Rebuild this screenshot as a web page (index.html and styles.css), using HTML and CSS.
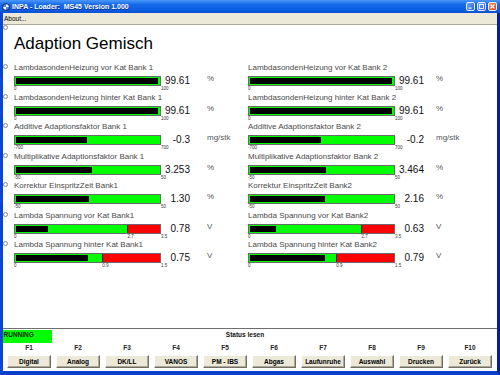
FILE: index.html
```html
<!DOCTYPE html>
<html lang="de">
<head>
	<meta charset="UTF-8">
	<title>INPA - Loader: MS45 Version 1.000</title>
	<link rel="stylesheet" href="styles.css">
</head>
<body>

	<div class="window">
		<div class="titlebar">
			<svg class="app-icon" viewBox="0 0 8 8">
				<circle cx="4" cy="4" r="3.8" fill="#1b2f6e"/>
				<path d="M4 4 L4 1.2 A2.8 2.8 0 0 1 6.8 4 Z" fill="#fff"/>
				<path d="M4 4 L4 6.8 A2.8 2.8 0 0 1 1.2 4 Z" fill="#fff"/>
				<path d="M4 4 L6.8 4 A2.8 2.8 0 0 1 4 6.8 Z" fill="#4c8ee8"/>
				<path d="M4 4 L1.2 4 A2.8 2.8 0 0 1 4 1.2 Z" fill="#4c8ee8"/>
			</svg>
			<span class="title">INPA - Loader:  MS45 Version 1.000</span>
			<div class="caption-buttons">
				<div class="caption-btn">
					<svg viewBox="0 0 7 7"><rect x="1.5" y="4.5" width="3" height="1.2" fill="#fff"/></svg>
				</div>
				<div class="caption-btn">
					<svg viewBox="0 0 7 7"><rect x="1.5" y="1.5" width="4" height="4" fill="none" stroke="#fff" stroke-width="0.9"/></svg>
				</div>
				<div class="caption-btn close">
					<svg viewBox="0 0 7 7"><path d="M1.6 1.6 L5.4 5.4 M5.4 1.6 L1.6 5.4" stroke="#fff" stroke-width="1.2"/></svg>
				</div>
			</div>
		</div>

		<div class="frame">
			<div class="menubar">About...</div>

			<div class="panel">
				<div class="panel-head">
					<span class="dot"></span>
					<h1>Adaption Gemisch</h1>
				</div>

				<div class="columns">
					<div class="col col-left">
						<div class="meter">
							<span class="dot"></span>
							<div class="meter-body">
								<div class="meter-label">LambdasondenHeizung vor Kat Bank 1</div>
								<div class="meter-line">
									<div class="gauge">
										<div class="bar"><div class="fill" style="width: 99.61%"></div></div>
										<div class="scale"><span>0</span><span style="left: 100%">100</span></div>
									</div>
									<div class="value">99.61</div>
									<div class="unit">%</div>
								</div>
							</div>
						</div>
						<div class="meter">
							<span class="dot"></span>
							<div class="meter-body">
								<div class="meter-label">LambdasondenHeizung hinter Kat Bank 1</div>
								<div class="meter-line">
									<div class="gauge">
										<div class="bar"><div class="fill" style="width: 99.61%"></div></div>
										<div class="scale"><span>0</span><span style="left: 100%">100</span></div>
									</div>
									<div class="value">99.61</div>
									<div class="unit">%</div>
								</div>
							</div>
						</div>
						<div class="meter">
							<span class="dot"></span>
							<div class="meter-body">
								<div class="meter-label">Additive Adaptionsfaktor Bank 1</div>
								<div class="meter-line">
									<div class="gauge">
										<div class="bar"><div class="fill" style="width: 49.98%"></div></div>
										<div class="scale"><span>-700</span><span style="left: 100%">700</span></div>
									</div>
									<div class="value">-0.3</div>
									<div class="unit">mg/stk</div>
								</div>
							</div>
						</div>
						<div class="meter">
							<span class="dot"></span>
							<div class="meter-body">
								<div class="meter-label">Multiplikative Adaptionsfaktor Bank 1</div>
								<div class="meter-line">
									<div class="gauge">
										<div class="bar"><div class="fill" style="width: 53.25%"></div></div>
										<div class="scale"><span>-50</span><span style="left: 100%">50</span></div>
									</div>
									<div class="value">3.253</div>
									<div class="unit">%</div>
								</div>
							</div>
						</div>
						<div class="meter">
							<span class="dot"></span>
							<div class="meter-body">
								<div class="meter-label">Korrektur EinspritzZeit Bank1</div>
								<div class="meter-line">
									<div class="gauge">
										<div class="bar"><div class="fill" style="width: 51.3%"></div></div>
										<div class="scale"><span>-50</span><span style="left: 100%">50</span></div>
									</div>
									<div class="value">1.30</div>
									<div class="unit">%</div>
								</div>
							</div>
						</div>
						<div class="meter">
							<span class="dot"></span>
							<div class="meter-body">
								<div class="meter-label">Lambda Spannung vor Kat Bank1</div>
								<div class="meter-line">
									<div class="gauge">
										<div class="bar zoned" style="--warn: 77.14%"><div class="fill" style="width: 22.29%"></div></div>
										<div class="scale"><span>0</span><span style="left: 77.14%">2.7</span><span style="left: 100%">3.5</span></div>
									</div>
									<div class="value">0.78</div>
									<div class="unit">V</div>
								</div>
							</div>
						</div>
						<div class="meter">
							<span class="dot"></span>
							<div class="meter-body">
								<div class="meter-label">Lambda Spannung hinter Kat Bank1</div>
								<div class="meter-line">
									<div class="gauge">
										<div class="bar zoned" style="--warn: 60%"><div class="fill" style="width: 50%"></div></div>
										<div class="scale"><span>0</span><span style="left: 60%">0.9</span><span style="left: 100%">1.5</span></div>
									</div>
									<div class="value">0.75</div>
									<div class="unit">V</div>
								</div>
							</div>
						</div>
					</div>

					<div class="col col-right">
						<div class="meter">
							<div class="meter-body">
								<div class="meter-label">LambdasondenHeizung vor Kat Bank 2</div>
								<div class="meter-line">
									<div class="gauge">
										<div class="bar"><div class="fill" style="width: 99.61%"></div></div>
										<div class="scale"><span>0</span><span style="left: 100%">100</span></div>
									</div>
									<div class="value">99.61</div>
									<div class="unit">%</div>
								</div>
							</div>
						</div>
						<div class="meter">
							<div class="meter-body">
								<div class="meter-label">LambdasondenHeizung hinter Kat Bank 2</div>
								<div class="meter-line">
									<div class="gauge">
										<div class="bar"><div class="fill" style="width: 99.61%"></div></div>
										<div class="scale"><span>0</span><span style="left: 100%">100</span></div>
									</div>
									<div class="value">99.61</div>
									<div class="unit">%</div>
								</div>
							</div>
						</div>
						<div class="meter">
							<div class="meter-body">
								<div class="meter-label">Additive Adaptionsfaktor Bank 2</div>
								<div class="meter-line">
									<div class="gauge">
										<div class="bar"><div class="fill" style="width: 49.99%"></div></div>
										<div class="scale"><span>-700</span><span style="left: 100%">700</span></div>
									</div>
									<div class="value">-0.2</div>
									<div class="unit">mg/stk</div>
								</div>
							</div>
						</div>
						<div class="meter">
							<div class="meter-body">
								<div class="meter-label">Multiplikative Adaptionsfaktor Bank 2</div>
								<div class="meter-line">
									<div class="gauge">
										<div class="bar"><div class="fill" style="width: 53.46%"></div></div>
										<div class="scale"><span>-50</span><span style="left: 100%">50</span></div>
									</div>
									<div class="value">3.464</div>
									<div class="unit">%</div>
								</div>
							</div>
						</div>
						<div class="meter">
							<div class="meter-body">
								<div class="meter-label">Korrektur EinspritzZeit Bank2</div>
								<div class="meter-line">
									<div class="gauge">
										<div class="bar"><div class="fill" style="width: 52.16%"></div></div>
										<div class="scale"><span>-50</span><span style="left: 100%">50</span></div>
									</div>
									<div class="value">2.16</div>
									<div class="unit">%</div>
								</div>
							</div>
						</div>
						<div class="meter">
							<div class="meter-body">
								<div class="meter-label">Lambda Spannung vor Kat Bank2</div>
								<div class="meter-line">
									<div class="gauge">
										<div class="bar zoned" style="--warn: 77.14%"><div class="fill" style="width: 18%"></div></div>
										<div class="scale"><span>0</span><span style="left: 77.14%">2.7</span><span style="left: 100%">3.5</span></div>
									</div>
									<div class="value">0.63</div>
									<div class="unit">V</div>
								</div>
							</div>
						</div>
						<div class="meter">
							<div class="meter-body">
								<div class="meter-label">Lambda Spannung hinter Kat Bank2</div>
								<div class="meter-line">
									<div class="gauge">
										<div class="bar zoned" style="--warn: 60%"><div class="fill" style="width: 52.67%"></div></div>
										<div class="scale"><span>0</span><span style="left: 60%">0.9</span><span style="left: 100%">1.5</span></div>
									</div>
									<div class="value">0.79</div>
									<div class="unit">V</div>
								</div>
							</div>
						</div>
					</div>
				</div>
			</div>

			<div class="statusbar">
				<div class="running">RUNNING</div>
				<div class="status-text">Status lesen</div>
			</div>

			<div class="fkeys">
				<div class="fkey"><span class="fkey-label">F1</span><button>Digital</button></div>
				<div class="fkey"><span class="fkey-label">F2</span><button>Analog</button></div>
				<div class="fkey"><span class="fkey-label">F3</span><button>DK/LL</button></div>
				<div class="fkey"><span class="fkey-label">F4</span><button>VANOS</button></div>
				<div class="fkey"><span class="fkey-label">F5</span><button>PM - IBS</button></div>
				<div class="fkey"><span class="fkey-label">F6</span><button>Abgas</button></div>
				<div class="fkey"><span class="fkey-label">F7</span><button>Laufunruhe</button></div>
				<div class="fkey"><span class="fkey-label">F8</span><button>Auswahl</button></div>
				<div class="fkey"><span class="fkey-label">F9</span><button>Drucken</button></div>
				<div class="fkey"><span class="fkey-label">F10</span><button>Zurück</button></div>
			</div>
		</div>
	</div>

</body>
</html>
```

FILE: styles.css
```css
* {
	box-sizing: border-box;
}

body {
	margin: 0;
	font-family: "Liberation Sans", Arial, sans-serif;
	background-color: #fff;
}

.window {
	width: 500px;
	height: 375px;
	display: flex;
	flex-direction: column;
}

/* Titelleiste */
.titlebar {
	height: 13px;
	display: flex;
	align-items: center;
	padding-left: 2px;
	background: linear-gradient(#4a97fa 0%, #166ae9 35%, #0a5de3 80%, #0a4fcc 100%);
	color: #fff;
}

.app-icon {
	width: 8px;
	height: 8px;
}

.title {
	margin-left: 2px;
	font-size: 7px;
	font-weight: bold;
	white-space: pre;
	text-shadow: 0.5px 0.5px 0 #0a2f8a;
}

.caption-buttons {
	margin-left: auto;
	margin-right: 3px;
	display: flex;
	gap: 2px;
}

.caption-btn {
	width: 9px;
	height: 9px;
	border: 1px solid #e8eefc;
	border-radius: 2px;
	background: linear-gradient(135deg, #6aa4fa, #2a62e6);
}

.caption-btn svg {
	display: block;
	width: 7px;
	height: 7px;
}

.caption-btn.close {
	background: linear-gradient(135deg, #f29a78, #d9421c);
}

/* Fensterrahmen */
.frame {
	flex: 1;
	display: flex;
	flex-direction: column;
	border-style: solid;
	border-width: 0 3px 4px 3px;
	border-color: #0a46d6 #00229e #0a3fcb #0a46d6;
}

.menubar {
	height: 12px;
	padding-left: 1px;
	background-color: #ece9d8;
	border-bottom: 1px solid #aca899;
	font-size: 6.5px;
	line-height: 11px;
}

/* Messwerte */
.panel {
	flex: 1;
	background-color: #fff;
}

.panel-head {
	display: flex;
	align-items: flex-start;
}

.panel-head h1 {
	margin: 9px 0 0;
	font-size: 17px;
	font-weight: normal;
	line-height: 20px;
	color: #000;
}

.dot {
	flex: none;
	width: 5px;
	height: 5px;
	margin-right: 6px;
	border: 1px solid #8a8a8a;
	border-radius: 50%;
	background-color: #fff;
}

.columns {
	display: flex;
	margin-top: 9px;
}

.col-left {
	width: 245px;
}

.meter {
	display: flex;
	align-items: flex-start;
	height: 29.5px;
}

.meter .dot {
	margin-top: 1px;
}

.meter-label {
	font-size: 8px;
	line-height: 10px;
	color: #4a4a4a;
	white-space: nowrap;
}

.meter-line {
	display: flex;
	align-items: flex-start;
	margin-top: 3px;
}

.gauge {
	width: 147px;
}

.bar {
	height: 10px;
	padding: 1px;
	border: 1px solid #6a6a6a;
	background-color: #00ff00;
}

.bar.zoned {
	background: linear-gradient(to right,
		#00ff00 var(--warn),
		#303030 var(--warn),
		#303030 calc(var(--warn) + 1px),
		#ff0000 calc(var(--warn) + 1px));
}

.fill {
	height: 100%;
	background-color: #000;
}

.scale {
	position: relative;
	height: 6.5px;
	font-size: 4.5px;
	line-height: 6px;
	color: #333;
}

.scale span {
	position: absolute;
	top: 0;
	left: 0;
}

.value {
	width: 29px;
	text-align: right;
	font-size: 10px;
	line-height: 10px;
	color: #111;
}

.unit {
	margin-left: 17px;
	margin-top: -1px;
	font-size: 8px;
	line-height: 8px;
	color: #555;
}

.col-right .unit {
	margin-left: 12px;
}

/* Statuszeile */
.statusbar {
	height: 15px;
	padding-top: 1px;
	border-top: 1px solid #6f6f6f;
	display: grid;
	grid-template-columns: 1fr auto 1fr;
	align-items: start;
	background-color: #fff;
}

.running {
	width: 49px;
	height: 12.5px;
	padding-left: 0.5px;
	background-color: #00ff00;
	font-size: 6.5px;
	font-weight: bold;
	line-height: 9px;
	color: #0d2a0d;
}

.status-text {
	margin-right: 10px;
	font-size: 6.5px;
	font-weight: bold;
	line-height: 9px;
	color: #111;
}

/* Funktionstasten */
.fkeys {
	display: grid;
	grid-template-columns: repeat(10, 49px);
	padding: 0 0 3px 1.5px;
	background-color: #fff;
}

.fkey {
	display: flex;
	flex-direction: column;
	align-items: center;
}

.fkey-label {
	font-size: 6.5px;
	font-weight: bold;
	line-height: 9px;
	color: #222;
}

.fkey button {
	margin-top: 3px;
	width: 44px;
	height: 13px;
	padding: 0;
	font-family: "Liberation Sans", Arial, sans-serif;
	font-size: 6.5px;
	font-weight: bold;
	color: #000;
	background-color: #ece9d8;
	border: 1px solid;
	border-color: #fff #716f64 #716f64 #fff;
	box-shadow: inset -1px -1px 0 #aca899;
}
```
